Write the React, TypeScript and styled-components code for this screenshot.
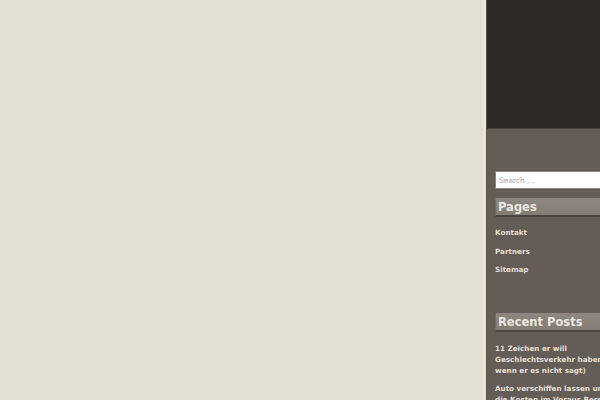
import React from "react";
import styled, { createGlobalStyle } from "styled-components";

const GlobalStyle = createGlobalStyle`
  html, body {
    margin: 0;
    padding: 0;
    background: #e3dfd3;
    overflow: hidden;
  }
  body {
    font-family: "DejaVu Sans", Verdana, sans-serif;
  }
`;

const Page = styled.div`
  display: flex;
  width: 800px;
  min-height: 400px;
`;

const Main = styled.main`
  width: 483px;
  flex-shrink: 0;
  background: #e3dfd3;
  border-right: 3px solid #e9e5db;
`;

const Sidebar = styled.aside`
  width: 220px;
  flex-shrink: 0;
  background: #645c56;
  border-left: 1px solid #58514c;
  min-height: 400px;
`;

const SidebarHeader = styled.div`
  height: 128px;
  background: #2e2926;
  border-bottom: 1px solid #4a433e;
`;

const SidebarBody = styled.div`
  padding: 42px 0 0 8px;
  width: 170px;
`;

const SearchInput = styled.input`
  display: block;
  box-sizing: border-box;
  width: 170px;
  height: 18px;
  margin: 0;
  padding: 0 3px;
  border: 1px solid #8a847e;
  background: #ffffff;
  font-family: "DejaVu Sans", Verdana, sans-serif;
  font-size: 7.5px;
  color: #555;
  outline: none;
  &::placeholder {
    color: #a9a6a2;
  }
`;

const Widget = styled.section<{ $gap: number }>`
  margin-top: ${(p) => p.$gap}px;
`;

const WidgetTitle = styled.h2`
  margin: 0;
  height: 17px;
  line-height: 19px;
  padding-left: 2px;
  background: linear-gradient(#8d877f, #827c74);
  border-left: 1px solid #6e6862;
  border-bottom: 2px solid #4a4440;
  color: #ece8e0;
  font-family: "DejaVu Sans", Verdana, sans-serif;
  font-weight: bold;
  font-size: 11.5px;
  white-space: nowrap;
  overflow: hidden;
`;

const LinkList = styled.ul`
  list-style: none;
  margin: 7px 0 0;
  padding: 0;
`;

const LinkItem = styled.li`
  font-size: 7.2px;
  line-height: 18.5px;
`;

const SideLink = styled.a`
  color: #e4dfd4;
  text-decoration: none;
  font-weight: bold;
`;

const PostList = styled.ul`
  list-style: none;
  margin: 10.5px 0 0;
  padding: 0;
  width: 145px;
`;

const PostItem = styled.li`
  font-size: 7.2px;
  line-height: 11px;
  margin-bottom: 7px;
`;

const PostLink = styled.a`
  color: #e4dfd4;
  text-decoration: none;
  font-weight: bold;
`;

export default function App() {
  return (
    <>
      <GlobalStyle />
      <Page>
        <Main />
        <Sidebar>
          <SidebarHeader />
          <SidebarBody>
            <SearchInput type="search" placeholder="Search …" />
            <Widget $gap={9}>
              <WidgetTitle>Pages</WidgetTitle>
              <LinkList>
                <LinkItem>
                  <SideLink href="#">Kontakt</SideLink>
                </LinkItem>
                <LinkItem>
                  <SideLink href="#">Partners</SideLink>
                </LinkItem>
                <LinkItem>
                  <SideLink href="#">Sitemap</SideLink>
                </LinkItem>
              </LinkList>
            </Widget>
            <Widget $gap={33.5}>
              <WidgetTitle>Recent Posts</WidgetTitle>
              <PostList>
                <PostItem>
                  <PostLink href="#">
                    11 Zeichen er will Geschlechtsverkehr haben (auch wenn er es nicht sagt)
                  </PostLink>
                </PostItem>
                <PostItem>
                  <PostLink href="#">
                    Auto verschiffen lassen und die{"\u00a0"}Kosten im Voraus Berechnen
                  </PostLink>
                </PostItem>
              </PostList>
            </Widget>
          </SidebarBody>
        </Sidebar>
      </Page>
    </>
  );
}
